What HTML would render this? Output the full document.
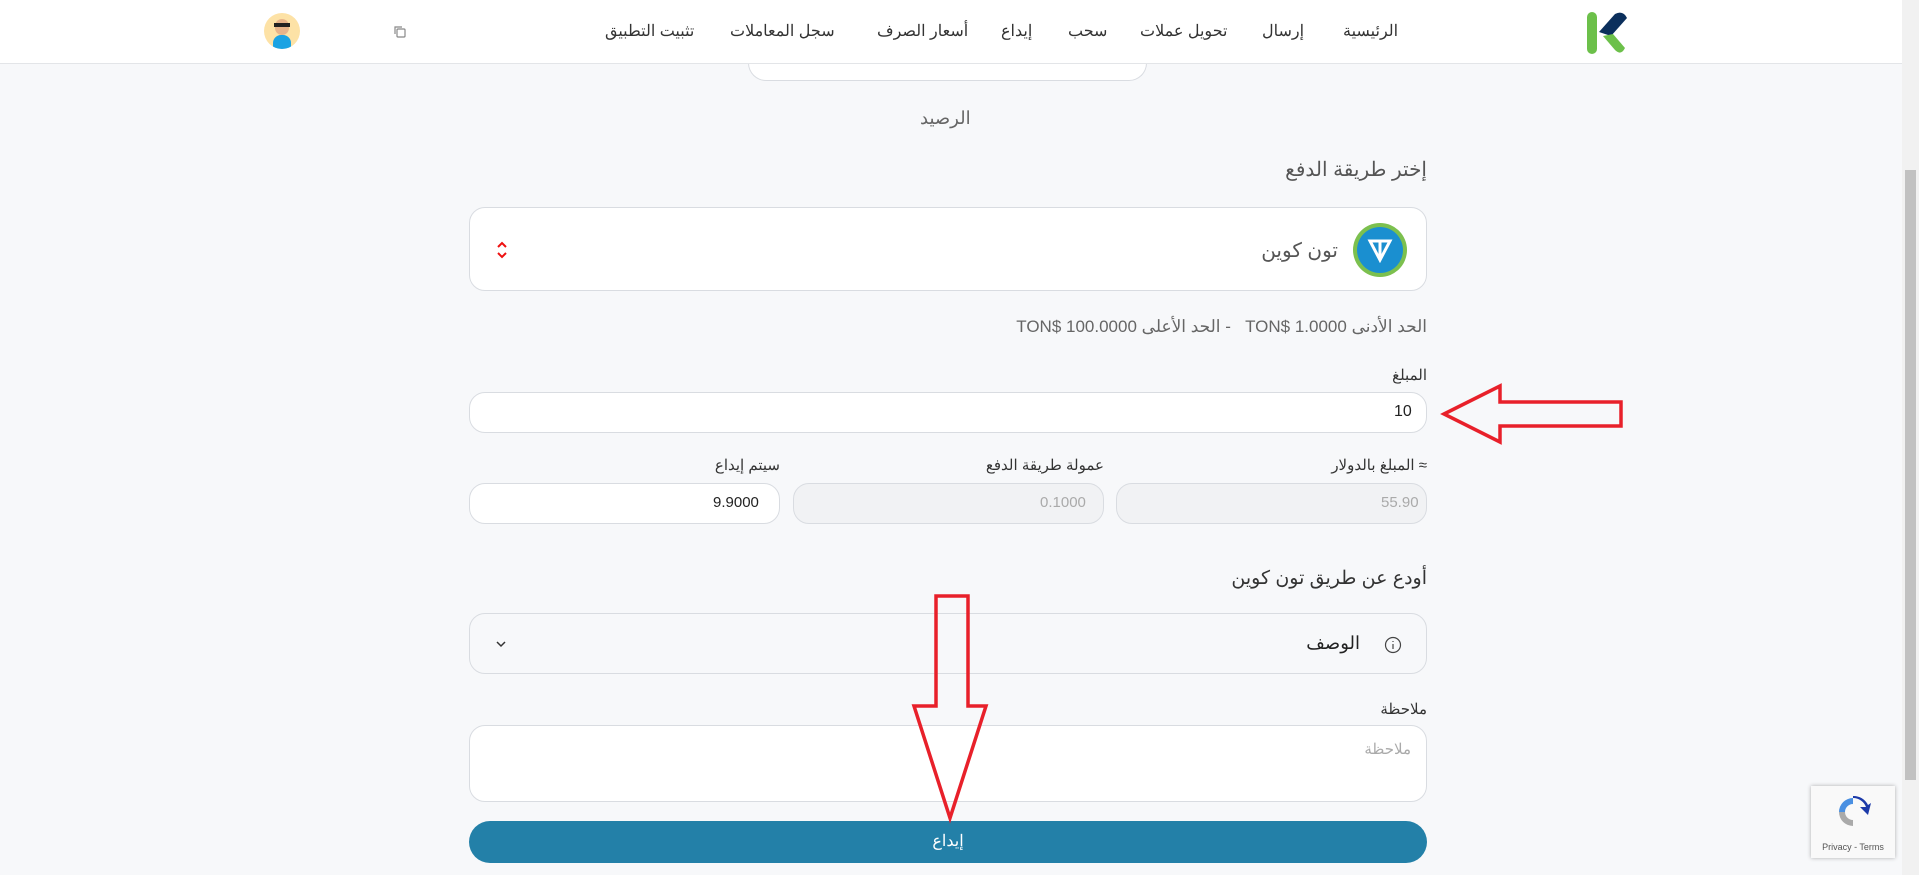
<!DOCTYPE html>
<html dir="rtl"><head><meta charset="utf-8"><style>
*{box-sizing:border-box;margin:0;padding:0}
body{width:1919px;height:875px;overflow:hidden;background:#f7f8fa;font-family:"Liberation Sans","Noto Sans CJK SC",sans-serif;color:#333;position:relative}
.abs{position:absolute}
header{position:absolute;left:0;top:0;width:1902px;height:64px;background:#fff;border-bottom:1px solid #e3e5e8}
.nav{position:absolute;top:21px;font-size:16px;color:#333;white-space:nowrap}
.box{position:absolute;background:#fff;border:1px solid #d9dce1;border-radius:16px}
.lbl{position:absolute;font-size:15px;color:#333;white-space:nowrap}
.dis{background:#f1f2f4}
</style></head><body>
<header>
<svg class="abs" style="left:1585px;top:10px" width="48" height="46" viewBox="0 0 48 46"><rect x="2" y="2" width="10" height="42" rx="5" fill="#6cc04a"/><path d="M14 22 L30 4 Q38 0 42 8 L26 26 Z" fill="#0b2f5c"/><path d="M18 26 L30 40 Q36 46 40 38 L28 24 Z" fill="#6cc04a"/></svg>
<div class="nav" style="left:1343px">الرئيسية</div>
<div class="nav" style="left:1262px">إرسال</div>
<div class="nav" style="left:1140px">تحويل عملات</div>
<div class="nav" style="left:1068px">سحب</div>
<div class="nav" style="left:1001px">إيداع</div>
<div class="nav" style="left:877px">أسعار الصرف</div>
<div class="nav" style="left:730px">سجل المعاملات</div>
<div class="nav" style="left:605px">تثبيت التطبيق</div>
<svg class="abs" style="left:393px;top:25px" width="13" height="13" viewBox="0 0 13 13" fill="none" stroke="#888" stroke-width="1.2"><rect x="4" y="4" width="8" height="8" rx="1"/><path d="M2 9V2h7"/></svg>
<div class="abs" style="left:264px;top:13px;width:36px;height:36px;border-radius:50%;background:#fde2a6;overflow:hidden"><div class="abs" style="left:9px;top:22px;width:18px;height:16px;border-radius:8px 8px 0 0;background:#1ba3e3"></div><div class="abs" style="left:11px;top:6px;width:14px;height:16px;border-radius:7px;background:#e8b48a"></div><div class="abs" style="left:10px;top:10px;width:16px;height:4px;background:#222"></div></div>
</header>
<div class="abs" style="left:1902px;top:0;width:17px;height:875px;background:#f1f1f1"><div class="abs" style="left:3px;top:170px;width:11px;height:610px;background:#c1c1c1"></div></div>
<div class="box" style="left:748px;top:50px;width:399px;height:31px;border-top:none;border-radius:0 0 18px 18px;z-index:0"></div>
<header style="z-index:2;background:#fff"></header>
<div class="nav" style="left:1343px;z-index:3">الرئيسية</div>
<div class="nav" style="left:1262px;z-index:3">إرسال</div>
<div class="nav" style="left:1140px;z-index:3">تحويل عملات</div>
<div class="nav" style="left:1068px;z-index:3">سحب</div>
<div class="nav" style="left:1001px;z-index:3">إيداع</div>
<div class="nav" style="left:877px;z-index:3">أسعار الصرف</div>
<div class="nav" style="left:730px;z-index:3">سجل المعاملات</div>
<div class="nav" style="left:605px;z-index:3">تثبيت التطبيق</div>
<svg class="abs" style="left:1585px;top:10px;z-index:3" width="48" height="46" viewBox="0 0 48 46"><rect x="2" y="2" width="10" height="42" rx="5" fill="#6cc04a"/><path d="M14 22 L30 4 Q38 0 42 8 L26 26 Z" fill="#0b2f5c"/><path d="M18 26 L30 40 Q36 46 40 38 L28 24 Z" fill="#6cc04a"/></svg>
<svg class="abs" style="left:393px;top:25px;z-index:3" width="13" height="13" viewBox="0 0 13 13" fill="none" stroke="#888" stroke-width="1.2"><rect x="4" y="4" width="8" height="8" rx="1"/><path d="M2 9V2h7"/></svg>
<div class="abs" style="left:264px;top:13px;width:36px;height:36px;border-radius:50%;background:#fde2a6;overflow:hidden;z-index:3"><div class="abs" style="left:9px;top:22px;width:18px;height:16px;border-radius:8px 8px 0 0;background:#1ba3e3"></div><div class="abs" style="left:11px;top:6px;width:14px;height:16px;border-radius:7px;background:#e8b48a"></div><div class="abs" style="left:10px;top:10px;width:16px;height:4px;background:#222"></div></div>

<div class="lbl" style="left:920px;top:108px;font-size:18px;color:#666">الرصيد</div>
<div class="lbl" style="right:492px;top:157px;font-size:20px;color:#555">إختر طريقة الدفع</div>
<div class="box" style="left:469px;top:207px;width:958px;height:84px"></div>
<div class="abs" style="left:1353px;top:223px;width:54px;height:54px;border-radius:50%;background:#7cc04e"><div class="abs" style="left:4px;top:4px;width:46px;height:46px;border-radius:50%;background:#1a8fd0"></div><svg class="abs" style="left:14px;top:14px" width="26" height="26" viewBox="0 0 26 26" fill="none" stroke="#fff" stroke-width="3"><path d="M3 4h20L13 23Z M13 4v19"/></svg></div>
<div class="lbl" style="right:581px;top:238px;font-size:20px;color:#555">تون كوين</div>
<svg class="abs" style="left:496px;top:240px" width="12" height="20" viewBox="0 0 12 20" fill="none" stroke="#e11" stroke-width="2"><path d="M2 7l4-4 4 4M2 13l4 4 4-4"/></svg>
<div class="lbl" style="right:492px;top:317px;font-size:17px;color:#666">الحد الأدنى TON$ 1.0000 &nbsp; - الحد الأعلى TON$ 100.0000</div>
<div class="lbl" style="right:492px;top:366px">المبلغ</div>
<div class="box" style="left:469px;top:392px;width:958px;height:41px"></div>
<div class="lbl" style="left:1394px;top:403px;font-size:16px;color:#222">10</div>
<svg class="abs" style="left:1440px;top:382px" width="186" height="64" viewBox="0 0 186 64" fill="none" stroke="#e8202a" stroke-width="3.5"><path d="M4 32 L60 4 V20 H181 V44 H60 V60 Z"/></svg>
<div class="lbl" style="right:492px;top:456px">≈ المبلغ بالدولار</div>
<div class="lbl" style="right:815px;top:456px">عمولة طريقة الدفع</div>
<div class="lbl" style="right:1139px;top:456px">سيتم إيداع</div>
<div class="box dis" style="left:1116px;top:483px;width:311px;height:41px"></div>
<div class="box dis" style="left:793px;top:483px;width:311px;height:41px"></div>
<div class="box" style="left:469px;top:483px;width:311px;height:41px"></div>
<div class="lbl" style="left:1381px;top:494px;color:#aaa">55.90</div>
<div class="lbl" style="left:1040px;top:494px;color:#aaa">0.1000</div>
<div class="lbl" style="left:713px;top:494px;color:#222">9.9000</div>
<div class="lbl" style="right:492px;top:567px;font-size:19px;color:#333">أودع عن طريق تون كوين</div>
<div class="box" style="left:469px;top:613px;width:958px;height:61px;background:#f7f8fa"></div>
<svg class="abs" style="left:1384px;top:636px" width="18" height="18" viewBox="0 0 18 18" fill="none" stroke="#444" stroke-width="1.2"><circle cx="9" cy="9" r="7.5"/><path d="M9 8v5M9 5v1"/></svg>
<div class="lbl" style="right:559px;top:633px;font-size:18px;color:#222">الوصف</div>
<svg class="abs" style="left:495px;top:640px" width="12" height="8" viewBox="0 0 12 8" fill="none" stroke="#333" stroke-width="1.5"><path d="M2 2l4 4 4-4"/></svg>
<div class="lbl" style="right:492px;top:700px">ملاحظة</div>
<div class="box" style="left:469px;top:725px;width:958px;height:77px"></div>
<div class="lbl" style="right:508px;top:740px;color:#aaa">ملاحظة</div>
<div class="abs" style="left:469px;top:821px;width:958px;height:42px;border-radius:21px;background:#2380a8;color:#fff;font-size:16px;text-align:center;line-height:42px">إيداع</div>
<svg class="abs" style="left:908px;top:592px" width="84" height="232" viewBox="0 0 84 232" fill="none" stroke="#e8202a" stroke-width="3.5"><path d="M28 4 H60 V114 H78 L42 226 L6 114 H28 Z"/></svg>
<div class="abs" style="left:1811px;top:786px;width:84px;height:72px;background:#f9f9f9;box-shadow:0 0 4px rgba(0,0,0,.3)"><svg class="abs" style="left:24px;top:8px" width="36" height="36" viewBox="0 0 36 36"><path d="M18 4a14 14 0 0 1 13 9l-6 0 8 8 3-12-3 2A16 16 0 0 0 18 2Z" fill="#1c3aa9"/><path d="M4 18a14 14 0 0 0 14 14v-6A8 8 0 0 1 10 18Z" fill="#aaa"/><path d="M18 4A14 14 0 0 0 4 18h6a8 8 0 0 1 8-8Z" fill="#4a90e2"/></svg><div class="abs" style="left:0;width:84px;top:56px;font-size:9px;text-align:center;color:#555" dir="ltr">Privacy - Terms</div></div>
</body></html>
